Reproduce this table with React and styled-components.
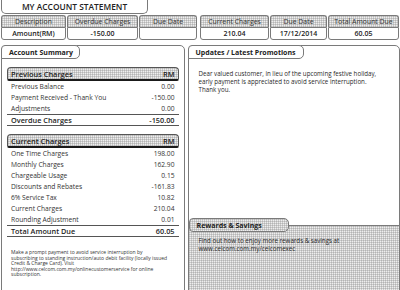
import React from 'react';
import styled, { createGlobalStyle, css } from 'styled-components';

const GlobalStyle = createGlobalStyle`
  html, body {
    margin: 0;
    padding: 0;
    background: #fff;
  }
  body {
    font-family: 'Open Sans', 'Noto Sans', sans-serif;
    color: #2a2a2a;
  }
`;

const dots = css`
  background-color: #eeeeee;
  background-image:
    linear-gradient(90deg, rgba(140, 140, 140, 0.35) 1px, transparent 1px),
    linear-gradient(rgba(140, 140, 140, 0.35) 1px, transparent 1px);
  background-size: 2px 2px;
`;

const Page = styled.div`
  width: 400px;
  height: 290px;
  overflow: hidden;
  box-sizing: border-box;
  padding-left: 1px;
`;

const TitleTab = styled.div`
  box-sizing: border-box;
  width: 147px;
  height: 14px;
  border: 1px solid #7a7a7a;
  border-top: none;
  border-radius: 0 0 5px 5px;
  display: flex;
  align-items: center;
  justify-content: center;
  font-size: 8.4px;
  font-weight: 600;
  color: #222;
`;

const SummaryBar = styled.div`
  display: flex;
  gap: 3px;
  margin-top: 1px;
`;

const SummaryGroup = styled.div`
  display: grid;
  grid-template-columns: ${(p) => p.$cols};
  grid-template-rows: 12px 13px;
  column-gap: 1px;
`;

const HeadCell = styled.div`
  box-sizing: border-box;
  ${dots};
  border: 1px solid #7a7a7a;
  border-bottom: none;
  border-radius: 3px 3px 0 0;
  display: flex;
  align-items: center;
  justify-content: center;
  font-size: 6.9px;
  color: #333;
`;

const ValueCell = styled.div`
  box-sizing: border-box;
  border: 1px solid #7a7a7a;
  border-radius: 0 0 3px 3px;
  display: flex;
  align-items: center;
  justify-content: center;
  font-size: 7px;
  font-weight: 600;
  color: #222;
`;

const Panels = styled.div`
  display: flex;
  gap: 3px;
  margin-top: 5px;
`;

const Panel = styled.div`
  box-sizing: border-box;
  width: ${(p) => p.$width}px;
  height: 250px;
  border: 1px solid #7a7a7a;
  border-radius: 5px 5px 0 0;
  display: flex;
  flex-direction: column;
`;

const Tab = styled.div`
  box-sizing: border-box;
  width: ${(p) => p.$width}px;
  height: 14px;
  margin: -1px 0 0 -1px;
  border: 1px solid #7a7a7a;
  border-radius: 4px 5px 5px 0;
  display: flex;
  align-items: center;
  padding-left: 7px;
  font-size: 7px;
  font-weight: 700;
  color: #222;
  background: #fff;
  ${(p) => p.$shaded && dots};
`;

const Summary = styled.div`
  padding: 8px 5px 0 5px;
`;

const SectionHead = styled.div`
  box-sizing: border-box;
  height: 14px;
  ${dots};
  border: 1px solid #555;
  border-bottom: 2px solid #1a1a1a;
  border-radius: 4px 4px 2px 2px;
  display: flex;
  align-items: center;
  justify-content: space-between;
  padding: 0 3px 0 3px;
  font-size: 7.4px;
  font-weight: 600;
  color: #1e1e1e;
`;

const Row = styled.div`
  height: ${(p) => (p.$total ? 10 : 11)}px;
  display: flex;
  align-items: center;
  justify-content: space-between;
  padding: 0 4px 0 4px;
  font-size: ${(p) => (p.$total ? 7.3 : 6.7)}px;
  font-weight: ${(p) => (p.$total ? 600 : 400)};
  color: ${(p) => (p.$total ? '#1e1e1e' : '#333')};
  ${(p) =>
    p.$total &&
    css`
      border-top: 1px solid #555;
      border-bottom: 1px solid #555;
    `};
`;

const Section = styled.div`
  margin-bottom: ${(p) => p.$gap || 0}px;
`;

const Note = styled.p`
  margin: 13px 0 0 0;
  padding-left: 4px;
  font-size: 5px;
  line-height: 5.6px;
  white-space: nowrap;
  color: #333;
`;

const Body = styled.p`
  margin: 0;
  padding: ${(p) => p.$pad};
  font-size: 6.2px;
  line-height: ${(p) => p.$line}px;
  white-space: nowrap;
  color: #2a2a2a;
`;

const Updates = styled.div`
  height: 166px;
`;

const Rewards = styled.div`
  flex: 1;
  ${dots};
  border-top: 1px solid #7a7a7a;
`;

const RewardsTab = styled(Tab)`
  margin: -8px 0 0 0;
  border-radius: 4px 5px 5px 4px;
`;

const top1 = [
  ['Description', 'Amount(RM)'],
  ['Overdue Charges', '-150.00'],
  ['Due Date', ''],
];

const top2 = [
  ['Current Charges', '210.04'],
  ['Due Date', '17/12/2014'],
  ['Total Amount Due', '60.05'],
];

const previous = [
  ['Previous Balance', '0.00'],
  ['Payment Received - Thank You', '-150.00'],
  ['Adjustments', '0.00'],
];

const current = [
  ['One Time Charges', '198.00'],
  ['Monthly Charges', '162.90'],
  ['Chargeable Usage', '0.15'],
  ['Discounts and Rebates', '-161.83'],
  ['6% Service Tax', '10.82'],
  ['Current Charges', '210.04'],
  ['Rounding Adjustment', '0.01'],
];

const Group = ({ items, cols }) => (
  <SummaryGroup $cols={cols}>
    {items.map(([h]) => (
      <HeadCell key={'h' + h}>{h}</HeadCell>
    ))}
    {items.map(([h, v]) => (
      <ValueCell key={'v' + h}>{v}</ValueCell>
    ))}
  </SummaryGroup>
);

const Charges = ({ title, rows, total, gap }) => (
  <Section $gap={gap}>
    <SectionHead>
      <span>{title}</span>
      <span>RM</span>
    </SectionHead>
    {rows.map(([label, value]) => (
      <Row key={label}>
        <span>{label}</span>
        <span>{value}</span>
      </Row>
    ))}
    <Row $total>
      <span>{total[0]}</span>
      <span>{total[1]}</span>
    </Row>
  </Section>
);

const App = () => (
  <Page>
    <GlobalStyle />
    <TitleTab>MY ACCOUNT STATEMENT</TitleTab>

    <SummaryBar>
      <Group items={top1} cols="65px 71px 58px" />
      <Group items={top2} cols="69px 57px 71px" />
    </SummaryBar>

    <Panels>
      <Panel $width={184}>
        <Tab $width={79}>Account Summary</Tab>
        <Summary>
          <Charges
            title="Previous Charges"
            rows={previous}
            total={['Overdue Charges', '-150.00']}
            gap={8}
          />
          <Charges
            title="Current Charges"
            rows={current}
            total={['Total Amount Due', '60.05']}
          />
          <Note>
            Make a prompt payment to avoid service interruption by
            <br />
            subscribing to standing instruction/auto debit facility (locally issued
            <br />
            Credit &amp; Charge Card). Visit
            <br />
            http://www.celcom.com.my/onlinecustomerservice for online
            <br />
            subscription.
          </Note>
        </Summary>
      </Panel>

      <Panel $width={213}>
        <Tab $width={116}>Updates / Latest Promotions</Tab>
        <Updates>
          <Body $pad="11px 0 0 10px" $line={8}>
            Dear valued customer, in lieu of the upcoming festive holiday,
            <br />
            early payment is appreciated to avoid service interruption.
            <br />
            Thank you.
          </Body>
        </Updates>
        <Rewards>
          <RewardsTab $width={100} $shaded>
            Rewards &amp; Savings
          </RewardsTab>
          <Body $pad="5px 0 0 10px" $line={7.6}>
            Find out how to enjoy more rewards &amp; savings at
            <br />
            www.celcom.com.my/celcomexec
          </Body>
        </Rewards>
      </Panel>
    </Panels>
  </Page>
);

export default App;
